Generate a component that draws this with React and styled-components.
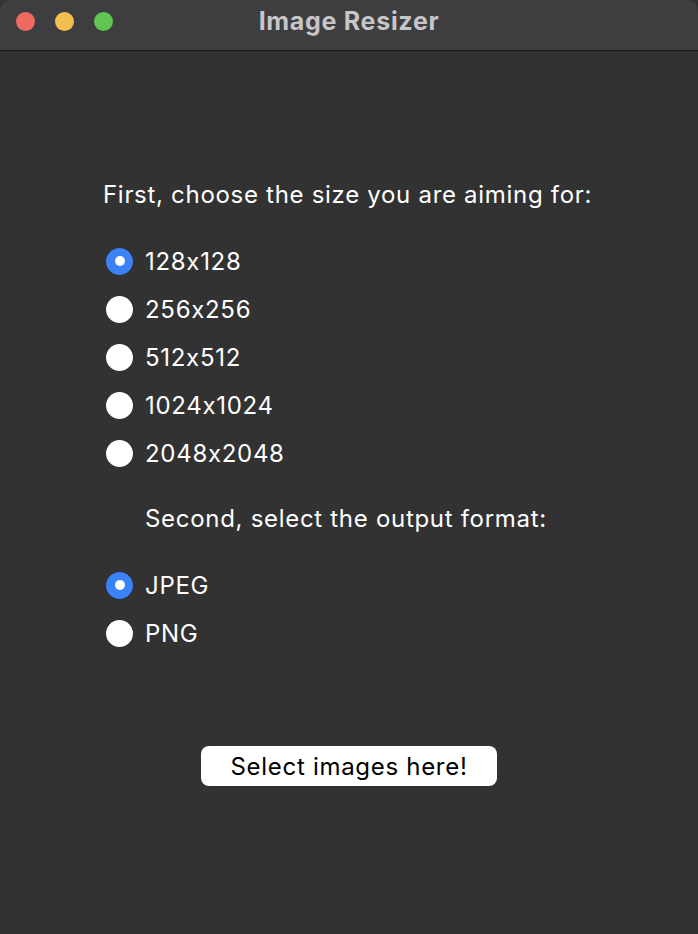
import React, { useState } from 'react';
import styled, { createGlobalStyle } from 'styled-components';

const GlobalStyle = createGlobalStyle`
    html, body {
        margin: 0;
        padding: 0;
        background: #323232;
    }
    body {
        font-family: Inter, "Liberation Sans", sans-serif;
        font-feature-settings: "calt" 0;
        -webkit-font-smoothing: antialiased;
    }
`;

const Window = styled.div`
    width: 698px;
    height: 934px;
    display: flex;
    flex-direction: column;
    background: #323232;
    border-radius: 10px 10px 0 0;
    overflow: hidden;
`;

const TitleBar = styled.div`
    position: relative;
    height: 50px;
    flex-shrink: 0;
    display: flex;
    align-items: center;
    justify-content: center;
    background: #3e3e40;
    border-bottom: 1px solid #161616;
`;

const Lights = styled.div`
    position: absolute;
    left: 16px;
    top: 12px;
    display: flex;
    gap: 20px;
`;

const Light = styled.span`
    width: 19px;
    height: 19px;
    border-radius: 50%;
    background: ${(p) => p.color};
`;

const Title = styled.div`
    color: #c6c6c8;
    font-size: 25px;
    font-weight: 700;
    letter-spacing: 0.7px;
    margin-top: -8px;
`;

const Content = styled.div`
    flex: 1;
    display: flex;
    flex-direction: column;
    padding: 128px 0 0 103px;
    color: #ffffff;
`;

const Heading = styled.div`
    font-size: 24px;
    letter-spacing: 0.7px;
    line-height: 32px;
    margin-left: ${(p) => (p.indent ? '42px' : '0')};
    margin-bottom: 26px;
`;

const Group = styled.div`
    display: flex;
    flex-direction: column;
    margin-bottom: ${(p) => p.gap || 0}px;
`;

const Option = styled.label`
    display: flex;
    align-items: center;
    height: 48px;
    font-size: 24px;
    letter-spacing: 0.7px;
    cursor: pointer;
`;

const Radio = styled.span`
    width: 27px;
    height: 27px;
    border-radius: 50%;
    box-sizing: border-box;
    margin-left: 3px;
    margin-right: 12px;
    display: flex;
    align-items: center;
    justify-content: center;
    background: ${(p) => (p.checked ? '#3b82f6' : '#ffffff')};
    box-shadow: 0 0 1px rgba(0, 0, 0, 0.5);

    &::after {
        content: '';
        width: 10px;
        height: 10px;
        border-radius: 50%;
        background: #ffffff;
        display: ${(p) => (p.checked ? 'block' : 'none')};
    }
`;

const ButtonRow = styled.div`
    display: flex;
    justify-content: center;
    margin-left: -103px;
`;

const SelectButton = styled.button`
    width: 296px;
    height: 40px;
    background: #ffffff;
    border: none;
    border-radius: 8px;
    color: #000000;
    font-family: inherit;
    font-feature-settings: "calt" 0;
    font-size: 24px;
    letter-spacing: 0.7px;
    cursor: pointer;
`;

const sizes = ['128x128', '256x256', '512x512', '1024x1024', '2048x2048'];
const formats = ['JPEG', 'PNG'];

const App = () => {
    const [size, setSize] = useState(sizes[0]);
    const [format, setFormat] = useState(formats[0]);

    return (
        <>
            <GlobalStyle />
            <Window>
                <TitleBar>
                    <Lights>
                        <Light color="#ee6a5f" />
                        <Light color="#f5bf4f" />
                        <Light color="#61c554" />
                    </Lights>
                    <Title>Image Resizer</Title>
                </TitleBar>
                <Content>
                    <Heading>First, choose the size you are aiming for:</Heading>
                    <Group gap={26}>
                        {sizes.map((s) => (
                            <Option key={s} onClick={() => setSize(s)}>
                                <Radio checked={size === s} />
                                {s}
                            </Option>
                        ))}
                    </Group>
                    <Heading indent>Second, select the output format:</Heading>
                    <Group gap={89}>
                        {formats.map((f) => (
                            <Option key={f} onClick={() => setFormat(f)}>
                                <Radio checked={format === f} />
                                {f}
                            </Option>
                        ))}
                    </Group>
                    <ButtonRow>
                        <SelectButton>Select images here!</SelectButton>
                    </ButtonRow>
                </Content>
            </Window>
        </>
    );
};

export default App;
